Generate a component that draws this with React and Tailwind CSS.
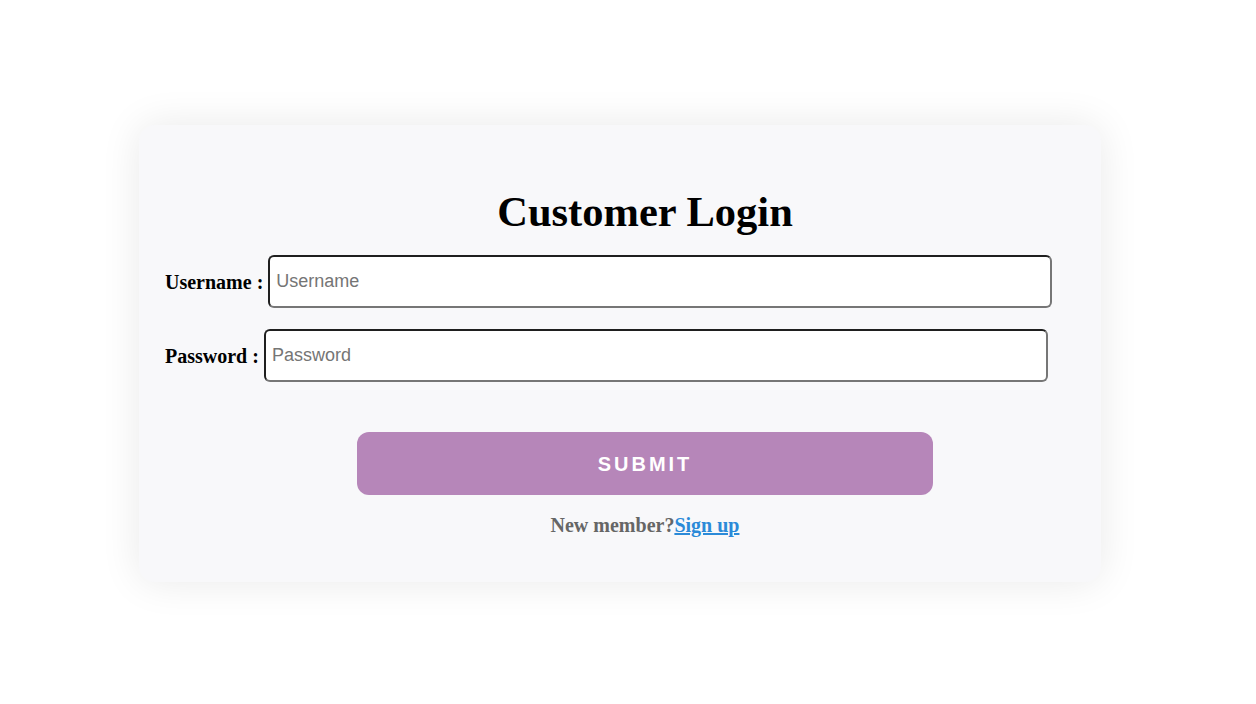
import React, { useState } from 'react';

const App = () => {
    const [username, setUsername] = useState('');
    const [password, setPassword] = useState('');

    // inset look of the default browser input border
    const inputClass =
        'h-[53px] w-[784px] rounded-md border-2 border-t-[#1f1f1f] border-l-[#1f1f1f] border-r-[#767676] border-b-[#767676] bg-white px-[6px] text-[18px] text-black placeholder:text-[#757575] outline-none font-["Liberation_Sans",Arial,sans-serif]';

    return (
        <div className="min-h-screen bg-white pt-[125px] font-['Liberation_Serif','Times_New_Roman',serif]">
            <div className="ml-[139px] h-[457px] w-[962px] rounded-2xl bg-[#f8f8fa] pl-[26px] pt-[62px] shadow-[0_0_40px_rgba(0,0,0,0.09)]">
                <form onSubmit={(e) => e.preventDefault()} className="w-[960px]">
                    <h1 className="text-center text-[42.5px] font-bold leading-[49px] text-black">Customer Login</h1>

                    <div className="mt-[19px] flex items-center">
                        <label htmlFor="username" className="mr-[5px] text-[20px] font-bold text-black">
                            Username :
                        </label>
                        <input
                            id="username"
                            value={username}
                            onChange={(e) => setUsername(e.target.value)}
                            className={inputClass}
                            type="text"
                            placeholder="Username"
                        />
                    </div>

                    <div className="mt-[21px] flex items-center">
                        <label htmlFor="password" className="mr-[5px] text-[20px] font-bold text-black">
                            Password :
                        </label>
                        <input
                            id="password"
                            value={password}
                            onChange={(e) => setPassword(e.target.value)}
                            className={inputClass}
                            type="password"
                            placeholder="Password"
                        />
                    </div>

                    <div className="mt-[50px] flex justify-center">
                        <button
                            type="submit"
                            className="h-[63px] w-[576px] rounded-xl bg-[#b686b9] text-[20px] font-bold tracking-[3px] text-white font-['Liberation_Sans',Arial,sans-serif]"
                        >
                            SUBMIT
                        </button>
                    </div>

                    <p className="mt-[15px] text-center text-[20px] font-bold text-[#666666]">
                        New member?
                        <a href="#" className="text-[#2b8ad8] underline">
                            Sign up
                        </a>
                    </p>
                </form>
            </div>
        </div>
    );
};

export default App;
